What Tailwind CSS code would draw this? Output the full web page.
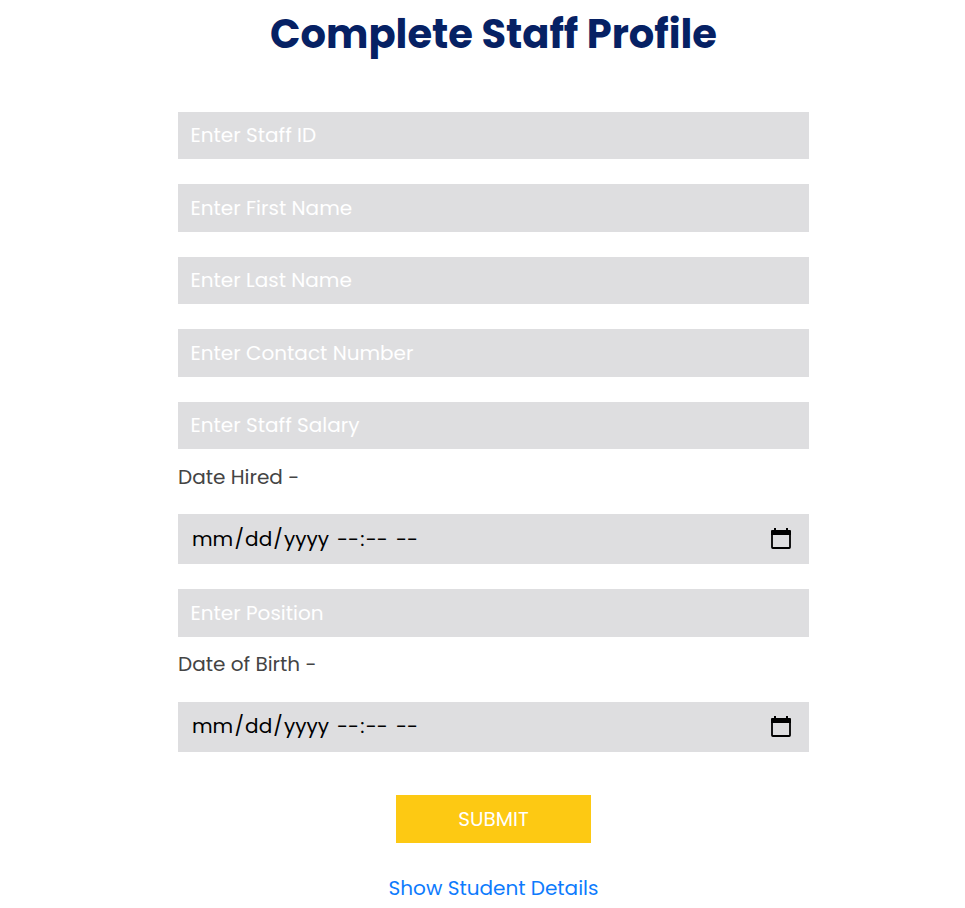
<!DOCTYPE html>
<html lang="en">
<head>
<meta charset="utf-8">
<title>Complete Staff Profile</title>
<script src="https://cdn.jsdelivr.net/npm/@tailwindcss/browser@4"></script>
</head>
<body class="bg-white overflow-hidden font-['Poppins','Inter',sans-serif] text-[20px] leading-[30px]">
<main class="ml-[178px] w-[631px] h-[908px] flex flex-col items-stretch whitespace-nowrap">
  <h1 class="mt-[9px] h-[50px] text-center text-[40px] leading-[50px] font-bold text-[#062164]">Complete Staff Profile</h1>
  <form class="mt-[53px] flex flex-col">
    <input type="text" placeholder="Enter Staff ID" class="h-[47px] bg-[#dedee0] px-[12.5px] pb-[2px] placeholder:text-white">
    <input type="text" placeholder="Enter First Name" class="mt-[25px] h-[48px] bg-[#dedee0] px-[12.5px] pb-px placeholder:text-white">
    <input type="text" placeholder="Enter Last Name" class="mt-[25px] h-[47px] bg-[#dedee0] px-[12.5px] pb-[2px] placeholder:text-white">
    <input type="text" placeholder="Enter Contact Number" class="mt-[25px] h-[48px] bg-[#dedee0] px-[12.5px] pb-px placeholder:text-white">
    <input type="text" placeholder="Enter Staff Salary" class="mt-[25px] h-[47px] bg-[#dedee0] px-[12.5px] pb-[2px] placeholder:text-white">
    <label class="mt-[13px] h-[30px] text-[#444]">Date Hired -</label>
    <div class="mt-[22px] h-[50px] bg-[#dedee0] pl-[14px] pr-[17px] flex items-center text-black">
      <span class="w-[145px] flex gap-[1.2px]"><span>mm</span><span>/</span><span>dd</span><span>/</span><span>yyyy</span></span>
      <span class="w-[59px] flex gap-[1.2px]"><span>--</span><span>:</span><span>--</span></span>
      <span>--</span>
      <svg class="ml-auto w-[22px] h-[22px]" viewBox="0 0 22 22"><path d="M4 0h2v3H4zM16 0h2v3h-2zM1 3q0-1 1-1h18q1 0 1 1v4H1z"/><path d="M2 5v14.2q0 .8.8.8h16.4q.8 0 .8-.8V5" fill="none" stroke="#000" stroke-width="1.8"/></svg></div>
    <input type="text" placeholder="Enter Position" class="mt-[25px] h-[48px] bg-[#dedee0] px-[12.5px] pb-px placeholder:text-white">
    <label class="mt-[12px] h-[30px] text-[#444]">Date of Birth -</label>
    <div class="mt-[23px] h-[50px] bg-[#dedee0] pl-[14px] pr-[17px] pb-[2px] flex items-center text-black">
      <span class="w-[145px] flex gap-[1.2px]"><span>mm</span><span>/</span><span>dd</span><span>/</span><span>yyyy</span></span>
      <span class="w-[59px] flex gap-[1.2px]"><span>--</span><span>:</span><span>--</span></span>
      <span>--</span>
      <svg class="ml-auto mt-[2px] w-[22px] h-[22px]" viewBox="0 0 22 22"><path d="M4 0h2v3H4zM16 0h2v3h-2zM1 3q0-1 1-1h18q1 0 1 1v4H1z"/><path d="M2 5v14.2q0 .8.8.8h16.4q.8 0 .8-.8V5" fill="none" stroke="#000" stroke-width="1.8"/></svg></div>
    <button type="button" class="mt-[43px] self-center w-[195px] h-[48px] bg-[#fdc913] text-white">SUBMIT</button>
  </form>
  <a class="mt-[30px] self-center text-[#0d7bfd]">Show Student Details</a>
</main>
</body>
</html>
